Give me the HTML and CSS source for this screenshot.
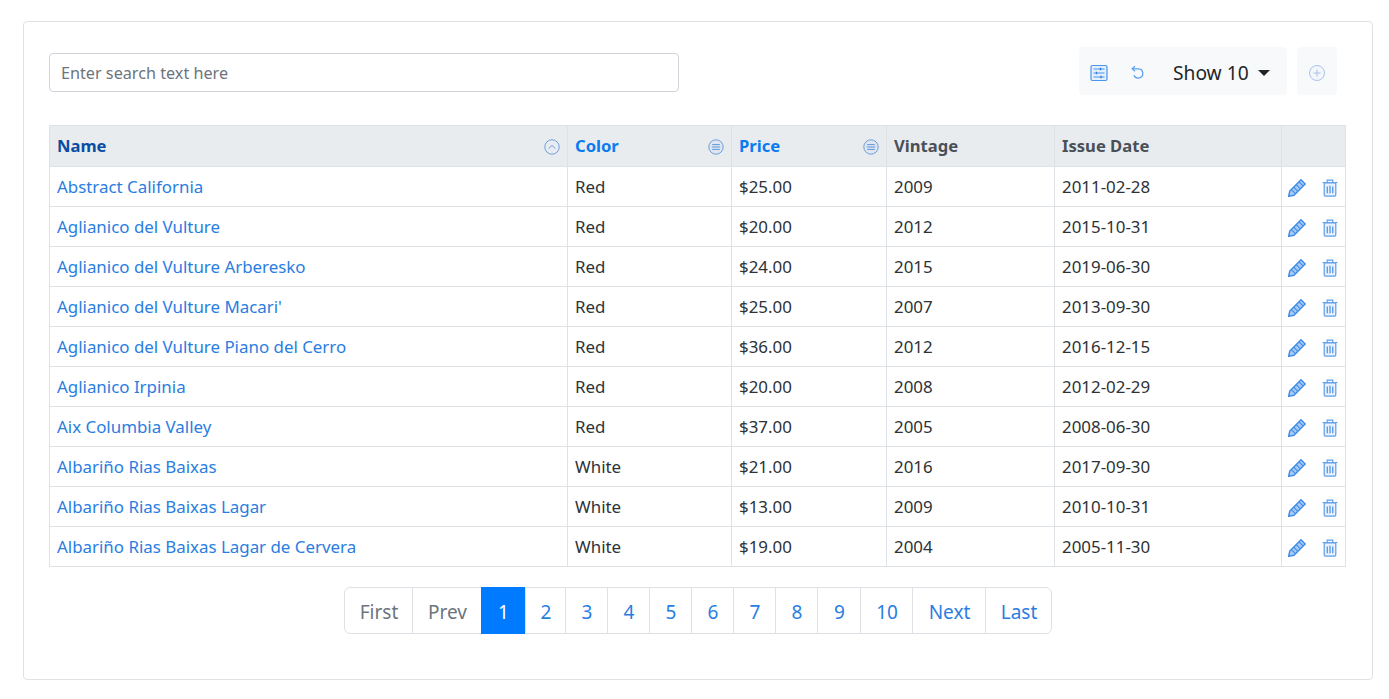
FILE: index.html
```html
<!DOCTYPE html>
<html lang="en">

<head>
  <title>Wines</title>
  <meta charset="utf-8">
  <link rel="stylesheet" href="styles.css">
</head>

<body>
  <svg class="defs" width="0" height="0">
    <symbol id="i-columns" viewBox="0 0 18 18">
      <rect x="1" y="1.5" width="16" height="15" rx="1.5" fill="#e3effd" stroke="#4b94ea" stroke-width="1.2" />
      <path d="M3.5 5h11M3.5 9h11M3.5 13h11" stroke="#4b94ea" stroke-width="1" fill="none" />
      <path d="M10.5 3.8v2.4M6.5 7.8v2.4M11 11.8v2.4" stroke="#2f7fe0" stroke-width="1.4" fill="none" />
    </symbol>
    <symbol id="i-undo" viewBox="0 0 16 16">
      <path d="M3.6 3.8h6a4.6 4.6 0 1 1-4.6 6.4" stroke="#5aa0ee" stroke-width="1.2" fill="none" />
      <path d="M6 1.2 3.2 3.8 6 6.4" stroke="#5aa0ee" stroke-width="1.2" fill="none" />
    </symbol>
    <symbol id="i-plus" viewBox="0 0 18 18">
      <circle cx="9" cy="9" r="7.5" fill="#f3f6fb" stroke="#a9c3ea" stroke-width="1" />
      <path d="M9 5.5v7M5.5 9h7" stroke="#a9c3ea" stroke-width="1" fill="none" />
    </symbol>
    <symbol id="i-sort-up" viewBox="0 0 16 16">
      <circle cx="8" cy="8" r="7.2" fill="#e9edf3" stroke="#6d9fdc" stroke-width="1" />
      <path d="M4.6 9.6 8 6.4l3.4 3.2" stroke="#6d9fdc" stroke-width="1" fill="none" />
    </symbol>
    <symbol id="i-sort" viewBox="0 0 16 16">
      <circle cx="8" cy="8" r="7.2" fill="#dfe6ef" stroke="#6d9fdc" stroke-width="1" />
      <path d="M4.2 5.6h7.6M3.8 8h8.4M4.2 10.4h7.6" stroke="#5f97da" stroke-width="1" fill="none" />
    </symbol>
    <symbol id="i-edit" viewBox="0 0 18 18">
      <path d="M13 .8 17.2 5 6 16.2.6 17.4 1.8 12Z" fill="#a9cbf5" stroke="#3f8ce8" stroke-width="1.4" stroke-linejoin="round" />
      <path d="M3.4 10.6l4 4M5.6 8.2l4 4M8.2 5.6l4 4M11 2.8l4 4" stroke="#3f8ce8" stroke-width="1.1" fill="none" />
    </symbol>
    <symbol id="i-trash" viewBox="0 0 16 18">
      <path d="M.6 3.5h14.8M5.2 3.2V1.2h5.6v2" stroke="#5f9ee8" stroke-width="1.2" fill="none" />
      <path d="M2.2 3.8h11.6v12a1.4 1.4 0 0 1-1.4 1.4H3.6a1.4 1.4 0 0 1-1.4-1.4Z" fill="#e8f1fc" stroke="#5f9ee8" stroke-width="1.2" />
      <path d="M5.3 7.4v6.8M8 6.8v7.4M10.7 7.4v6.8" stroke="#5f9ee8" stroke-width="1.4" fill="none" />
    </symbol>
  </svg>

  <div class="card">
    <div class="toolbar">
      <input class="search" type="text" placeholder="Enter search text here">
      <div class="actions">
        <div class="btn-group">
          <button class="icon-btn"><svg class="ico-18"><use href="#i-columns" /></svg></button>
          <button class="icon-btn undo"><svg class="ico-16"><use href="#i-undo" /></svg></button>
          <button class="show-btn">Show 10<span class="caret"></span></button>
        </div>
        <button class="add-btn"><svg class="ico-18"><use href="#i-plus" /></svg></button>
      </div>
    </div>

    <table class="grid">
      <colgroup>
        <col class="c-name">
        <col class="c-color">
        <col class="c-price">
        <col class="c-vintage">
        <col class="c-date">
        <col class="c-actions">
      </colgroup>
      <thead>
        <tr>
          <th class="sorted"><div class="th-in">Name<svg class="ico-16"><use href="#i-sort-up" /></svg></div></th>
          <th class="sortable"><div class="th-in">Color<svg class="ico-16"><use href="#i-sort" /></svg></div></th>
          <th class="sortable"><div class="th-in">Price<svg class="ico-16"><use href="#i-sort" /></svg></div></th>
          <th>Vintage</th>
          <th>Issue Date</th>
          <th></th>
        </tr>
      </thead>
      <tbody>
        <tr><td><a href="#">Abstract California</a></td><td>Red</td><td>$25.00</td><td>2009</td><td>2011-02-28</td><td class="row-actions"><svg class="ico-18"><use href="#i-edit" /></svg><svg class="ico-trash"><use href="#i-trash" /></svg></td></tr>
        <tr><td><a href="#">Aglianico del Vulture</a></td><td>Red</td><td>$20.00</td><td>2012</td><td>2015-10-31</td><td class="row-actions"><svg class="ico-18"><use href="#i-edit" /></svg><svg class="ico-trash"><use href="#i-trash" /></svg></td></tr>
        <tr><td><a href="#">Aglianico del Vulture Arberesko</a></td><td>Red</td><td>$24.00</td><td>2015</td><td>2019-06-30</td><td class="row-actions"><svg class="ico-18"><use href="#i-edit" /></svg><svg class="ico-trash"><use href="#i-trash" /></svg></td></tr>
        <tr><td><a href="#">Aglianico del Vulture Macari'</a></td><td>Red</td><td>$25.00</td><td>2007</td><td>2013-09-30</td><td class="row-actions"><svg class="ico-18"><use href="#i-edit" /></svg><svg class="ico-trash"><use href="#i-trash" /></svg></td></tr>
        <tr><td><a href="#">Aglianico del Vulture Piano del Cerro</a></td><td>Red</td><td>$36.00</td><td>2012</td><td>2016-12-15</td><td class="row-actions"><svg class="ico-18"><use href="#i-edit" /></svg><svg class="ico-trash"><use href="#i-trash" /></svg></td></tr>
        <tr><td><a href="#">Aglianico Irpinia</a></td><td>Red</td><td>$20.00</td><td>2008</td><td>2012-02-29</td><td class="row-actions"><svg class="ico-18"><use href="#i-edit" /></svg><svg class="ico-trash"><use href="#i-trash" /></svg></td></tr>
        <tr><td><a href="#">Aix Columbia Valley</a></td><td>Red</td><td>$37.00</td><td>2005</td><td>2008-06-30</td><td class="row-actions"><svg class="ico-18"><use href="#i-edit" /></svg><svg class="ico-trash"><use href="#i-trash" /></svg></td></tr>
        <tr><td><a href="#">Albariño Rias Baixas</a></td><td>White</td><td>$21.00</td><td>2016</td><td>2017-09-30</td><td class="row-actions"><svg class="ico-18"><use href="#i-edit" /></svg><svg class="ico-trash"><use href="#i-trash" /></svg></td></tr>
        <tr><td><a href="#">Albariño Rias Baixas Lagar</a></td><td>White</td><td>$13.00</td><td>2009</td><td>2010-10-31</td><td class="row-actions"><svg class="ico-18"><use href="#i-edit" /></svg><svg class="ico-trash"><use href="#i-trash" /></svg></td></tr>
        <tr><td><a href="#">Albariño Rias Baixas Lagar de Cervera</a></td><td>White</td><td>$19.00</td><td>2004</td><td>2005-11-30</td><td class="row-actions"><svg class="ico-18"><use href="#i-edit" /></svg><svg class="ico-trash"><use href="#i-trash" /></svg></td></tr>
      </tbody>
    </table>

    <ul class="pager">
      <li class="off w-first"><a href="#">First</a></li>
      <li class="off w-prev"><a href="#">Prev</a></li>
      <li class="on w-1"><a href="#">1</a></li>
      <li class="w-2"><a href="#">2</a></li>
      <li class="w-n"><a href="#">3</a></li>
      <li class="w-n"><a href="#">4</a></li>
      <li class="w-n"><a href="#">5</a></li>
      <li class="w-n"><a href="#">6</a></li>
      <li class="w-n"><a href="#">7</a></li>
      <li class="w-n"><a href="#">8</a></li>
      <li class="w-9"><a href="#">9</a></li>
      <li class="w-10"><a href="#">10</a></li>
      <li class="w-next"><a href="#">Next</a></li>
      <li class="w-last"><a href="#">Last</a></li>
    </ul>
  </div>
</body>

</html>
```

FILE: styles.css
```css
html,
body {
  margin: 0;
  background: #fff;
}

body {
  padding: 21px 16px 18px 23px;
  font-family: "Noto Sans", "Open Sans", sans-serif;
  font-size: 16.9px;
  color: #2d3237;
}

a {
  color: #2a7de1;
  text-decoration: none;
}

.defs {
  position: absolute;
}

.card {
  box-sizing: border-box;
  width: 1350px;
  height: 659px;
  padding: 25px 26px 0 25px;
  border: 1px solid #dfe2e5;
  border-radius: 4px;
}

.toolbar {
  display: flex;
  justify-content: space-between;
  align-items: flex-start;
  height: 48px;
  margin-bottom: 30px;
  padding-right: 9px;
}

.search {
  box-sizing: border-box;
  width: 630px;
  height: 39px;
  margin-top: 6px;
  padding: 0 11px;
  border: 1px solid #ced4da;
  border-radius: 4px;
  font: inherit;
  font-size: 16.2px;
  color: #495057;
}

.search::placeholder {
  color: #6c757d;
}

.actions {
  display: flex;
  gap: 10px;
}

.btn-group {
  box-sizing: border-box;
  display: flex;
  align-items: center;
  width: 208px;
  height: 48px;
  padding-top: 3px;
  background: #f8f9fa;
  border-radius: 4px;
}

.icon-btn,
.show-btn,
.add-btn {
  border: 0;
  background: none;
  padding: 0;
  font: inherit;
  color: inherit;
}

.icon-btn {
  display: flex;
  align-items: center;
  margin-left: 11px;
}

.icon-btn.undo {
  margin-left: 21px;
}

.show-btn {
  display: flex;
  align-items: center;
  margin-left: 28px;
  font-size: 19.2px;
  color: #212529;
}

.caret {
  width: 0;
  height: 0;
  margin-left: 9px;
  border-top: 6px solid #212529;
  border-left: 6px solid transparent;
  border-right: 6px solid transparent;
}

.add-btn {
  box-sizing: border-box;
  display: flex;
  align-items: center;
  justify-content: center;
  width: 40px;
  height: 48px;
  padding-top: 3px;
  background: #f8f9fa;
  border-radius: 4px;
}

.ico-18 {
  width: 18px;
  height: 18px;
}

.ico-16 {
  width: 16px;
  height: 16px;
}

.ico-trash {
  width: 16px;
  height: 18px;
  margin-left: 16px;
}

.grid {
  width: 1296px;
  border-collapse: collapse;
  table-layout: fixed;
}

.c-name {
  width: 518px;
}

.c-color {
  width: 164px;
}

.c-price {
  width: 155px;
}

.c-vintage {
  width: 168px;
}

.c-date {
  width: 227px;
}

.c-actions {
  width: 64px;
}

.grid th,
.grid td {
  height: 40px;
  box-sizing: border-box;
  padding: 0 7px;
  border: 1px solid #dee2e6;
  text-align: left;
  white-space: nowrap;
}

.grid th {
  height: 41px;
  padding-bottom: 2px;
  background: #e9ecef;
  color: #495057;
  font-size: 16.6px;
  font-weight: 700;
}

.grid th.sorted {
  color: #0a4ea3;
}

.grid th.sortable {
  color: #0a7bf0;
}

.th-in {
  display: flex;
  justify-content: space-between;
  align-items: center;
}

.th-in svg {
  margin-top: 4px;
}

.grid td.row-actions {
  padding: 2px 0 0 6px;
  line-height: 0;
}

.pager {
  display: flex;
  width: 708px;
  height: 47px;
  margin: 20px auto 0;
  padding: 0;
  list-style: none;
  font-size: 19px;
  box-sizing: border-box;
  border: 1px solid #dee2e6;
  border-radius: 6px;
}

.pager li {
  display: flex;
  box-sizing: border-box;
  border-left: 1px solid #dee2e6;
}

.pager li:first-child {
  border-left: 0;
}

.pager a {
  flex: 1;
  display: flex;
  align-items: center;
  justify-content: center;
  padding: 2px 0 0 2px;
}

.pager .off a {
  color: #6c757d;
}

.pager .on {
  margin: -1px 0;
  border-left: 0;
  background: #007bff;
}

.pager .on a {
  color: #fff;
}

.w-first {
  width: 67px;
}

.w-prev {
  width: 69px;
}

.w-1 {
  width: 44px;
}

.w-2 {
  width: 40px;
}

.w-n {
  width: 42px;
}

.w-9 {
  width: 43px;
}

.w-10 {
  width: 52px;
}

.w-next {
  width: 73px;
}

.w-last {
  width: 66px;
}
```
